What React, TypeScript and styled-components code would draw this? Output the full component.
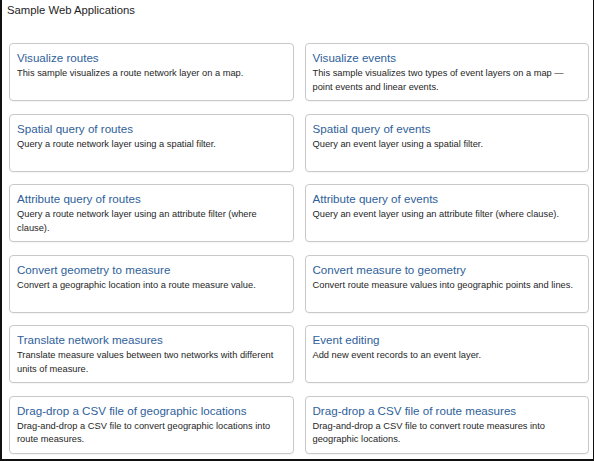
import React from 'react';
import styled, { createGlobalStyle } from 'styled-components';

const GlobalStyle = createGlobalStyle`
  html, body {
    margin: 0;
    padding: 0;
    background: #ffffff;
  }
  body {
    font-family: "Liberation Sans", Arial, sans-serif;
  }
`;

// page frame, the screenshot has a dark edge on left / right / bottom
const Frame = styled.div`
  box-sizing: border-box;
  width: 594px;
  height: 461px;
  border-left: 2px solid #111;
  border-right: 1px solid #111;
  border-bottom: 2px solid #111;
  background: #fff;
  overflow: hidden;
`;

const PageTitle = styled.h1`
  margin: 0 0 26px 0;
  padding: 3px 0 0 5px;
  font-size: 11.3px;
  line-height: 14px;
  font-weight: normal;
  color: #1e1e1e;
`;

const Grid = styled.div`
  display: grid;
  grid-template-columns: 1fr 1fr;
  grid-auto-rows: 58px;
  column-gap: 11px;
  row-gap: 12.5px;
  padding: 0 4px 0 7px;
`;

const Card = styled.a`
  box-sizing: border-box;
  display: block;
  padding: 7px 7px 0 7px;
  border: 1px solid #c9c9c9;
  border-radius: 4px;
  background: #fff;
  text-decoration: none;
  box-shadow: 0 1px 1px rgba(0, 0, 0, 0.04);
`;

const CardTitle = styled.div`
  font-size: 11.6px;
  line-height: 14px;
  color: #2f619a;
  margin-bottom: 2.4px;
  white-space: nowrap;
`;

const CardText = styled.div`
  font-size: 9.3px;
  line-height: 13.3px;
  color: #262626;
`;

interface Sample {
  title: string;
  text: string;
}

const samples: Sample[] = [
  { title: 'Visualize routes', text: 'This sample visualizes a route network layer on a map.' },
  {
    title: 'Visualize events',
    text: 'This sample visualizes two types of event layers on a map \u2014 point events and linear events.',
  },
  { title: 'Spatial query of routes', text: 'Query a route network layer using a spatial filter.' },
  { title: 'Spatial query of events', text: 'Query an event layer using a spatial filter.' },
  {
    title: 'Attribute query of routes',
    text: 'Query a route network layer using an attribute filter (where clause).',
  },
  {
    title: 'Attribute query of events',
    text: 'Query an event layer using an attribute filter (where clause).',
  },
  { title: 'Convert geometry to measure', text: 'Convert a geographic location into a route measure value.' },
  { title: 'Convert measure to geometry', text: 'Convert route measure values into geographic points and lines.' },
  {
    title: 'Translate network measures',
    text: 'Translate measure values between two networks with different units of measure.',
  },
  { title: 'Event editing', text: 'Add new event records to an event layer.' },
  {
    title: 'Drag-drop a CSV file of geographic locations',
    text: 'Drag-and-drop a CSV file to convert geographic locations into route measures.',
  },
  {
    title: 'Drag-drop a CSV file of route measures',
    text: 'Drag-and-drop a CSV file to convert route measures into geographic locations.',
  },
];

const App: React.FC = () => {
  return (
    <>
      <GlobalStyle />
      <Frame>
        <PageTitle>Sample Web Applications</PageTitle>
        <Grid>
          {samples.map((s) => (
            <Card key={s.title} href="#">
              <CardTitle>{s.title}</CardTitle>
              <CardText>{s.text}</CardText>
            </Card>
          ))}
        </Grid>
      </Frame>
    </>
  );
};

export default App;
